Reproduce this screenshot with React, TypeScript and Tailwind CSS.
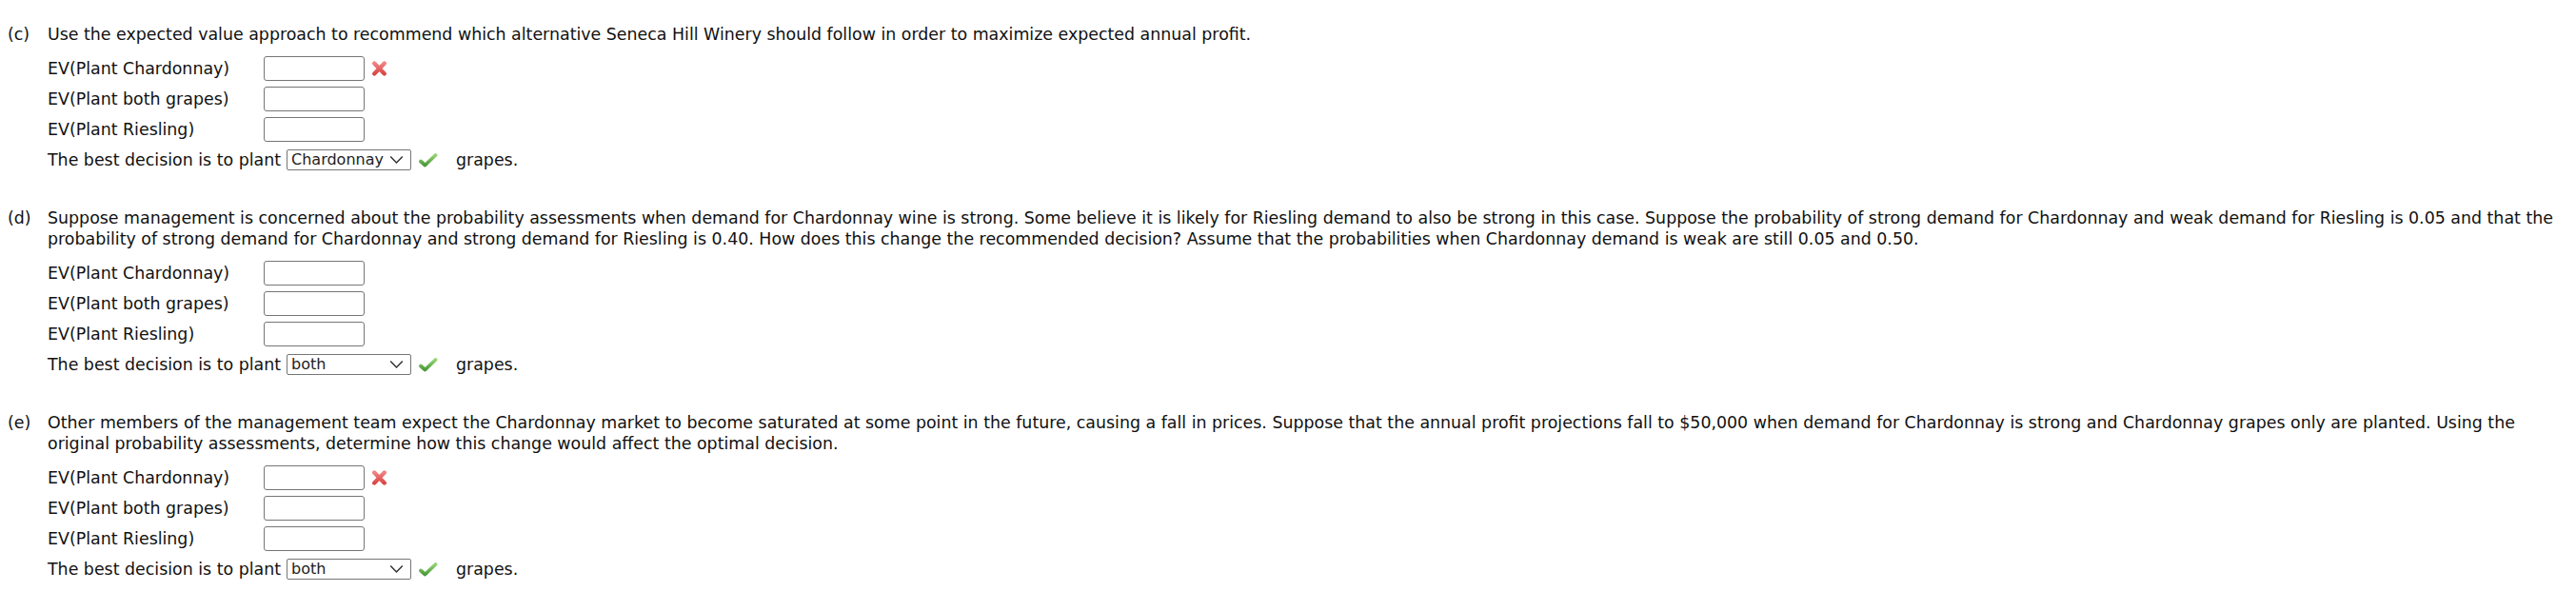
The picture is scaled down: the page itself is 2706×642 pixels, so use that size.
import React from 'react'

type Part = {
  label: string
  lines: string[]
  wrong: boolean
  choice: string
}

const parts: Part[] = [
  {
    label: '(c)',
    lines: [
      'Use the expected value approach to recommend which alternative Seneca Hill Winery should follow in order to maximize expected annual profit.',
    ],
    wrong: true,
    choice: 'Chardonnay',
  },
  {
    label: '(d)',
    lines: [
      'Suppose management is concerned about the probability assessments when demand for Chardonnay wine is strong. Some believe it is likely for Riesling demand to also be strong in this case. Suppose the probability of strong demand for Chardonnay and weak demand for Riesling is 0.05 and that the',
      'probability of strong demand for Chardonnay and strong demand for Riesling is 0.40. How does this change the recommended decision? Assume that the probabilities when Chardonnay demand is weak are still 0.05 and 0.50.',
    ],
    wrong: false,
    choice: 'both',
  },
  {
    label: '(e)',
    lines: [
      'Other members of the management team expect the Chardonnay market to become saturated at some point in the future, causing a fall in prices. Suppose that the annual profit projections fall to $50,000 when demand for Chardonnay is strong and Chardonnay grapes only are planted. Using the',
      'original probability assessments, determine how this change would affect the optimal decision.',
    ],
    wrong: true,
    choice: 'both',
  },
]

const CrossIcon = () => (
  <svg width="17" height="18" viewBox="0 0 17 18">
    <defs>
      <linearGradient id="xg" x1="0" y1="0" x2="0" y2="1">
        <stop offset="0" stopColor="#f28282" />
        <stop offset="1" stopColor="#d94848" />
      </linearGradient>
    </defs>
    <path d="M3.2 3.5 L13.8 14.5 M13.8 3.5 L3.2 14.5" stroke="url(#xg)" strokeWidth="4.4" strokeLinecap="round" fill="none" />
  </svg>
)

const CheckIcon = () => (
  <svg width="21" height="17" viewBox="0 0 21 17">
    <defs>
      <linearGradient id="cg" x1="0" y1="0" x2="0" y2="1">
        <stop offset="0" stopColor="#94d474" />
        <stop offset="1" stopColor="#4c9a3a" />
      </linearGradient>
    </defs>
    <path d="M3 9.5 L7.5 13.5 L18.5 3" stroke="url(#cg)" strokeWidth="3.8" strokeLinecap="round" strokeLinejoin="round" fill="none" />
  </svg>
)

const Chevron = () => (
  <svg width="15" height="10" viewBox="0 0 15 10">
    <path d="M1.2 1.5 L7.5 8 L13.8 1.5" stroke="#333" strokeWidth="1.5" fill="none" />
  </svg>
)

const EvRow = ({ name, mark }: { name: string; mark?: boolean }) => (
  <div className="flex items-center h-[26px]">
    <span className="w-[227px] shrink-0">{name}</span>
    <div className="w-[106px] h-[26px] border border-[#767676] rounded-[3px] bg-white shrink-0" />
    {mark && (
      <span className="ml-[7px] flex items-center">
        <CrossIcon />
      </span>
    )}
  </div>
)

const PartBlock = ({ part, first }: { part: Part; first: boolean }) => (
  <div className={`flex ${first ? '' : 'mt-[37px]'}`}>
    <span className="w-[42px] shrink-0">{part.label}</span>
    <div className="flex flex-col">
      {part.lines.map((l, i) => (
        <div key={i} className="whitespace-nowrap">
          {l}
        </div>
      ))}
      <div className="mt-[12px] flex flex-col gap-[6px]">
        <EvRow name="EV(Plant Chardonnay)" mark={part.wrong} />
        <EvRow name="EV(Plant both grapes)" />
        <EvRow name="EV(Plant Riesling)" />
        <div className="flex items-center h-[26px]">
          <span className="whitespace-nowrap">The best decision is to plant</span>
          <div className="ml-[6px] w-[131px] h-[22px] shrink-0 border border-[#767676] rounded-[2px] flex items-center justify-between pl-[4px] pr-[7px] text-[16px] text-[#222]">
            <span>{part.choice}</span>
            <Chevron />
          </div>
          <span className="ml-[7px] flex items-center">
            <CheckIcon />
          </span>
          <span className="ml-[19px]">grapes.</span>
        </div>
      </div>
    </div>
  </div>
)

export default function App() {
  return (
    <div
      className="w-[2706px] h-[642px] overflow-hidden bg-white text-[#111] text-[17.4px] leading-[22px] pl-[8px] pt-[25px]"
      style={{ fontFamily: '"DejaVu Sans", Verdana, sans-serif' }}
    >
      {parts.map((p, i) => (
        <PartBlock key={p.label} part={p} first={i === 0} />
      ))}
    </div>
  )
}
